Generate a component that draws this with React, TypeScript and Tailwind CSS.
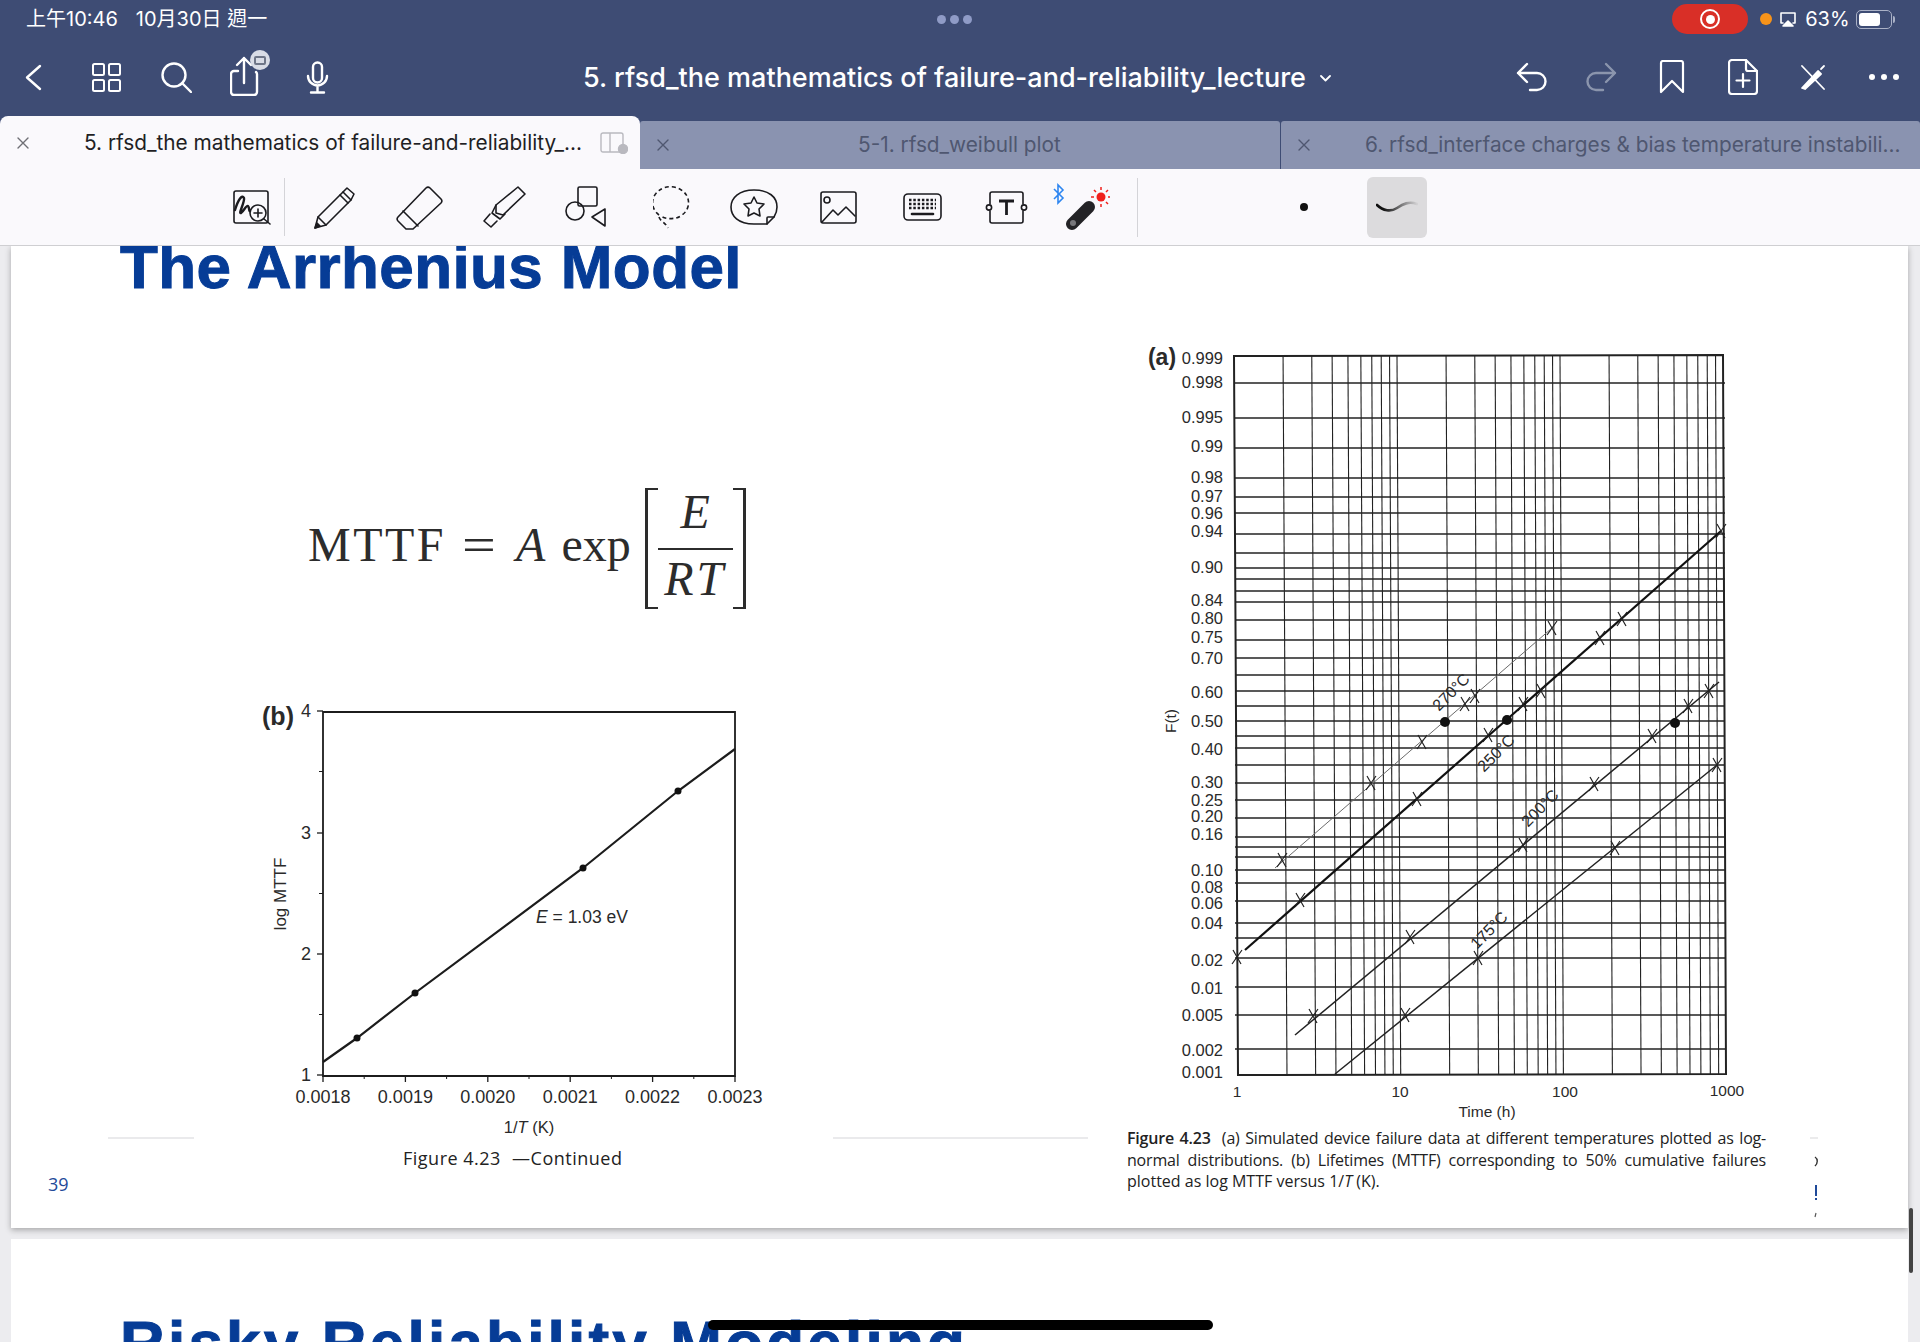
import type {ReactNode} from 'react';

const SANS = "[font-family:'Liberation_Sans',sans-serif]";
const UI = "[font-family:Inter,'Noto_Sans_CJK_TC',sans-serif]";

// --- header icons ---

function Ico({w, h, className, children, color = 'white', sw = 2.4}: {
  w: number;
  h: number;
  className?: string;
  children: ReactNode;
  color?: string;
  sw?: number;
}) {
  return (
    <svg
      width={w}
      height={h}
      viewBox={`0 0 ${w} ${h}`}
      fill="none"
      stroke={color}
      strokeWidth={sw}
      strokeLinecap="round"
      strokeLinejoin="round"
      className={`shrink-0 ${className ?? ''}`}
    >
      {children}
    </svg>
  );
}

function ShareIcon() {
  return (
    <div className="relative ml-[38px] mt-[-2px] h-[40px] w-[30px]">
      <Ico w={30} h={40}>
        <path d="M8 15H4a3 3 0 0 0-3 3v18a3 3 0 0 0 3 3h20a3 3 0 0 0 3-3V18a3 3 0 0 0-1-2" />
        <path d="M14 27V2M7 9l7-7 7 7" />
      </Ico>
      <span className="absolute left-[20px] top-[-6px] flex size-[20px] items-center justify-center rounded-full bg-[#d9dce6]">
        <span className="h-[9px] w-[12px] rounded-[2px] border-2 border-[#6f7688]" />
      </span>
    </div>
  );
}

function CloseX({color}: {color: string}) {
  return (
    <Ico w={12} h={12} color={color} sw={1.4}>
      <path d="M1 1l10 10M11 1L1 11" />
    </Ico>
  );
}

// --- toolbar icons ---

function Tool({w, h, ml, children}: {w: number; h: number; ml: number; children: ReactNode}) {
  return (
    <svg
      width={w}
      height={h}
      viewBox={`0 0 ${w} ${h}`}
      fill="none"
      stroke="#1b1b1f"
      strokeWidth={1.6}
      strokeLinecap="round"
      strokeLinejoin="round"
      className="shrink-0"
      style={{marginLeft: ml}}
    >
      {children}
    </svg>
  );
}

function Toolbar() {
  return (
    <div className="relative z-10 flex h-[77px] items-center border-b border-[#cfcfd2] bg-[#faf9fc] pl-[233px]">
      <Tool w={38} h={35} ml={0}>
        <rect x="1" y="1" width="34" height="32" rx="2" />
        <path d="M2 20c3-10 7-16 9-12 1 4-6 16-3 15 3-2 5-8 7-7 2 2 0 6 3 5" strokeWidth={2.4} />
        <circle cx="25" cy="23" r="8" fill="#faf9fc" />
        <path d="M25 19v8M21 23h8M31 29l6 5" />
      </Tool>
      <div className="ml-[13px] h-[58px] w-px bg-[#d4d4d8]" />
      <Tool w={42} h={43} ml={29}>
        <path d="M1 42l3-11L29 6l8 8-25 25z" />
        <path d="M4 31l8 8M29 6l4-4 7 6-3 6M26 9l8 8" />
        <path d="M1 42l5-2-3-3z" fill="#1b1b1f" />
      </Tool>
      <Tool w={48} h={45} ml={39}>
        <path d="M3 32L31 3a3 3 0 0 1 4 0l11 11a3 3 0 0 1 0 4L18 44H11L3 36a3 3 0 0 1 0-4z" />
        <path d="M8 26l15 15" />
      </Tool>
      <Tool w={45} h={44} ml={39}>
        <path d="M14 20L36 2l7 7-22 21-7-2z" />
        <path d="M14 20l-4 8 8 6 5-5M8 29l-6 7 7 6 6-6" />
      </Tool>
      <Tool w={42} h={42} ml={38}>
        <rect x="13" y="1" width="19" height="19" rx="1.5" />
        <circle cx="10" cy="25" r="9" />
        <path d="M40 23v17L27 31z" />
      </Tool>
      <Tool w={38} h={43} ml={46}>
        <path
          d="M6 29A18 16 0 1 1 23 32c-5 1-11 1-15-2M6 31c1 4 6 5 9 11"
          strokeDasharray="4 3"
          strokeLinecap="butt"
        />
      </Tool>
      <Tool w={48} h={36} ml={39}>
        <path d="M24 35C8 35 1 27 1 18S9 1 24 1s23 7 23 17c0 4-1 7-3 10l-7 7z" />
        <path d="M37 35v-6a1 1 0 0 1 1-1h6" />
        <path d="M24 8l3 6 7 1-5 5 1 7-6-3-6 3 1-7-5-5 7-1z" />
      </Tool>
      <Tool w={37} h={33} ml={42}>
        <rect x="1" y="1" width="35" height="31" rx="2" />
        <circle cx="7" cy="9" r="3" />
        <path d="M2 31l11-12 5 5 8-8 9 9" />
      </Tool>
      <Tool w={39} h={28} ml={46}>
        <rect x="1" y="1" width="37" height="26" rx="4" />
        <path
          d="M6 7h27M6 11h27M6 15h27"
          strokeDasharray="2.5 1.8"
          strokeLinecap="butt"
          strokeWidth={2.4}
        />
        <path d="M9 21h21" strokeWidth={2.6} />
      </Tool>
      <Tool w={43} h={33} ml={43}>
        <path d="M5 13V3a2 2 0 0 1 2-2h29a2 2 0 0 1 2 2v10M5 20v10a2 2 0 0 0 2 2h29a2 2 0 0 0 2-2V20" />
        <circle cx="4" cy="16.5" r="2.6" />
        <circle cx="39" cy="16.5" r="2.6" />
        <path d="M14 10h15M21.500 10v14" strokeWidth={2.8} strokeLinecap="butt" />
      </Tool>
      <div className="relative ml-[24px] h-[48px] w-[58px]">
        <svg width="58" height="48" viewBox="0 0 58 48" className="absolute left-0 top-0">
          <path d="M2 6l9 9-5 5V2l5 5-9 9" fill="none" stroke="#2e86f0" strokeWidth="1.6" />
          <path d="M20 41L37 24" stroke="#232326" strokeWidth="12" strokeLinecap="round" />
          <circle cx="21" cy="40" r="3" fill="#77777b" />
          <circle cx="49" cy="14" r="4.500" fill="#f0201c" />
          <path
            d="M49 4v3M49 21v3M39 14h3M56 14h2M42 7l2 2M54 19l2 2M56 7l-2 2"
            stroke="#f0201c"
            strokeWidth="1.5"
          />
        </svg>
      </div>
      <div className="ml-[27px] h-[59px] w-px bg-[#d4d4d8]" />
      <span className="ml-[162px] size-[8px] rounded-full bg-[#111]" />
      <div className="ml-[59px] flex h-[61px] w-[60px] items-center justify-center rounded-[6px] bg-[#dcdbdd]">
        <svg width="42" height="14" viewBox="0 0 42 14" fill="none">
          <defs>
            <linearGradient id="brush" x1="0" x2="1" y1="0" y2="0">
              <stop offset="0.15" stopColor="#111" />
              <stop offset="1" stopColor="#111" stopOpacity="0.05" />
            </linearGradient>
          </defs>
          <path d="M1 5c6 6 14 7 20 3s12-7 20-4" stroke="url(#brush)" strokeWidth="2.6" strokeLinecap="round" />
        </svg>
      </div>
    </div>
  );
}

// --- figure (b) ---

function Txt({x, y, size = 18, anchor = 'middle', weight, italic, children, rotate}: {
  x: number;
  y: number;
  size?: number;
  anchor?: 'start' | 'middle' | 'end';
  weight?: number;
  italic?: boolean;
  rotate?: number;
  children: ReactNode;
}) {
  return (
    <text
      x={x}
      y={y}
      fontSize={size}
      fontWeight={weight}
      fontStyle={italic ? 'italic' : undefined}
      textAnchor={anchor}
      dominantBaseline="central"
      fill="#2a2a2a"
      stroke="none"
      transform={rotate ? `rotate(${rotate} ${x} ${y})` : undefined}
    >
      {children}
    </text>
  );
}

function FigureB() {
  const xs = ['0.0018', '0.0019', '0.0020', '0.0021', '0.0022', '0.0023'];
  const ys = [
    {label: '4', y: 711},
    {label: '3', y: 833},
    {label: '2', y: 954},
    {label: '1', y: 1075}
  ];
  const dots = [
    [357, 1038],
    [415, 993],
    [583, 868],
    [678, 791]
  ];
  return (
    <svg
      width="1000"
      height="445"
      viewBox="100 700 1000 445"
      fill="none"
      stroke="#1c1c1c"
      className={`ml-[52px] mt-[91px] shrink-0 ${SANS}`}
    >
      <path d="M323 712H735V1076H323Z" strokeWidth="1.8" />
      {xs.map((label, i) => {
        const x = 323 + i * 82.4;
        return (
          <g key={label}>
            <path d={`M${x} 1076v6`} strokeWidth="1.3" />
            {i < 5 && <path d={`M${x + 41.2} 1076v3`} strokeWidth="1" />}
            <Txt x={x} y={1097}>{label}</Txt>
          </g>
        );
      })}
      {ys.map((t, i) => (
        <g key={t.label}>
          <path d={`M317 ${t.y}h6`} strokeWidth="1.3" />
          {i < 3 && <path d={`M319 ${t.y + 60.500}h4`} strokeWidth="1" />}
          <Txt x={306} y={t.y}>{t.label}</Txt>
        </g>
      ))}
      <path d="M323 1062L357 1038L415 993L583 868L678 791L735 749" strokeWidth="2.2" />
      {dots.map(([x, y]) => (
        <circle key={x} cx={x} cy={y} r="3.500" fill="#111" stroke="none" />
      ))}
      <Txt x={278} y={716} size={25} weight={700}>(b)</Txt>
      <Txt x={280} y={894} size={17} rotate={-90}>log MTTF</Txt>
      <text x="536" y="917" fontSize="17.5" fill="#2a2a2a" stroke="none" dominantBaseline="central">
        <tspan fontStyle="italic">E</tspan> = 1.03 eV
      </text>
      <text x="529" y="1127" fontSize="16.5" fill="#2a2a2a" stroke="none" textAnchor="middle" dominantBaseline="central">
        1/<tspan fontStyle="italic">T</tspan> (K)
      </text>
      <path d="M108 1138H194M833 1138H1088" stroke="#e4e4e6" strokeWidth="1.5" />
    </svg>
  );
}

// --- figure (a) ---

const PROB_LINES = [
  383, 418, 448, 478, 497, 513, 534, 553, 568, 579, 591, 602, 620, 640, 658, 675, 691, 706, 721, 736,
  748, 765, 783, 800, 818, 837, 847, 857, 870, 883, 901, 923, 938, 958, 987, 1015, 1049
];

const PROB_LABELS: [string, number][] = [
  ['0.999', 358], ['0.998', 382], ['0.995', 417], ['0.99', 446], ['0.98', 477], ['0.97', 496],
  ['0.96', 513], ['0.94', 531], ['0.90', 567], ['0.84', 600], ['0.80', 618], ['0.75', 637],
  ['0.70', 658], ['0.60', 692], ['0.50', 721], ['0.40', 749], ['0.30', 782], ['0.25', 800],
  ['0.20', 816], ['0.16', 834], ['0.10', 870], ['0.08', 887], ['0.06', 903], ['0.04', 923],
  ['0.02', 960], ['0.01', 988], ['0.005', 1015], ['0.002', 1050], ['0.001', 1072]
];

const SERIES = [
  {
    line: 'M1275 868L1552 628',
    stroke: '#6b6b6b',
    width: 1,
    marks: [[1282, 860], [1371, 783], [1422, 742], [1465, 704], [1475, 696], [1552, 628]],
    dot: [1445, 722]
  },
  {
    line: 'M1245 950L1721 531',
    stroke: '#111',
    width: 2.2,
    marks: [[1237, 957], [1300, 900], [1417, 799], [1488, 735], [1523, 704], [1541, 691], [1600, 638], [1622, 619], [1721, 531]],
    dot: [1507, 720]
  },
  {
    line: 'M1295 1035L1719 682',
    stroke: '#222',
    width: 1.5,
    marks: [[1313, 1016], [1410, 937], [1523, 845], [1594, 784], [1652, 736], [1688, 706], [1709, 691]],
    dot: [1675, 723]
  },
  {
    line: 'M1335 1074L1717 765',
    stroke: '#222',
    width: 1.5,
    marks: [[1405, 1015], [1478, 958], [1615, 848], [1717, 765]]
  }
];

function FigureA() {
  const mult = [1, 2, 3, 4, 5, 6, 7, 8, 9];
  const verticals = [0, 1, 2].flatMap((decade) =>
    mult.map((m) => decade + Math.log10(m)).filter((d) => d > 0)
  );
  return (
    <svg
      width="703"
      height="788"
      viewBox="1127 340 703 788"
      fill="none"
      stroke="#222"
      className={`shrink-0 ${SANS}`}
    >
      {PROB_LINES.map((y) => (
        <path key={y} d={`M1235 ${y}H1725`} strokeWidth="1.3" />
      ))}
      {verticals.map((d) => (
        <path
          key={d}
          d={`M${1234 + 163 * d} 356L${1238 + 162.7 * d} 1074`}
          strokeWidth="1.1"
        />
      ))}
      <path d="M1234 356L1723 355L1726 1074L1238 1075Z" strokeWidth="2" />
      {SERIES.map((s) => (
        <g key={s.line}>
          <path d={s.line} stroke={s.stroke} strokeWidth={s.width} />
          {s.marks.map(([x, y]) => (
            <path key={x} d={`M${x - 4} ${y - 7}L${x + 4} ${y + 7}M${x + 5} ${y - 7}L${x - 5} ${y + 7}`} stroke="#222" strokeWidth="1.2" />
          ))}
          {s.dot && <circle cx={s.dot[0]} cy={s.dot[1]} r="5" fill="#111" stroke="none" />}
        </g>
      ))}
      {PROB_LABELS.map(([label, y]) => (
        <Txt key={label} x={1223} y={y} size={16.500} anchor="end">{label}</Txt>
      ))}
      <Txt x={1237} y={1091} size={15.500}>1</Txt>
      <Txt x={1400} y={1091} size={15.500}>10</Txt>
      <Txt x={1565} y={1091} size={15.500}>100</Txt>
      <Txt x={1727} y={1090} size={15.500}>1000</Txt>
      <Txt x={1487} y={1111} size={15.500}>Time (h)</Txt>
      <Txt x={1170} y={721} size={15.500} rotate={-90}>F(t)</Txt>
      <Txt x={1162} y={357} size={23} weight={700}>(a)</Txt>
      <Txt x={1451} y={692} size={16} rotate={-45}>270°C</Txt>
      <Txt x={1496} y={753} size={16} rotate={-45}>250°C</Txt>
      <Txt x={1540} y={808} size={16} rotate={-45}>200°C</Txt>
      <Txt x={1489} y={930} size={16} rotate={-45}>175°C</Txt>
    </svg>
  );
}

function Fragments() {
  return (
    <svg width="42" height="100" viewBox="0 0 42 100" fill="none" className="ml-[22px] shrink-0">
      <path d="M22 10H30" stroke="#e4e4e6" strokeWidth="1.5" />
      <path d="M27 29c3 2 3 6 0 9" stroke="#333" strokeWidth="1.4" />
      <path d="M28 57v11M28 70v2" stroke="#1f4a99" strokeWidth="2" />
      <path d="M28 85l-1 4" stroke="#555" strokeWidth="1.2" />
    </svg>
  );
}

function Formula() {
  const SERIF = "[font-family:'Liberation_Serif',serif] text-[48px] leading-[48px] text-[#2c2c2c]";
  return (
    <div className={`ml-[260px] mt-[148px] flex h-[121px] items-center ${SERIF}`}>
      <span className="mb-[8px] tracking-[2.5px]">MTTF</span>
      <span className="mb-[8px] ml-[16px] origin-left scale-x-125">=</span>
      <span className="mb-[8px] ml-[27px] italic">A</span>
      <span className="mb-[8px] ml-[16px]">exp</span>
      <div className="ml-[14px] flex h-[121px]">
        <div className="w-[13px] border-y-2 border-l-[3px] border-[#2c2c2c]" />
        <div className="flex w-[75px] flex-col items-center italic">
          <span>E</span>
          <div className="mt-[12px] h-[2px] w-full bg-[#2c2c2c]" />
          <span className="mt-[5px] tracking-[3px]">RT</span>
        </div>
        <div className="w-[13px] border-y-2 border-r-[3px] border-[#2c2c2c]" />
      </div>
    </div>
  );
}

function Title({children, className}: {children: ReactNode; className?: string}) {
  return (
    <h1
      className={`ml-[109px] shrink-0 whitespace-nowrap text-[62px] font-bold leading-[60px] text-[#063c96] [-webkit-text-stroke:1px_#063c96] ${SANS} ${className ?? ''}`}
    >
      {children}
    </h1>
  );
}

const CAPTION = "[font-family:'Open_Sans',sans-serif] text-[16px] leading-[21.5px] text-[#222]";

export default function App() {
  return (
    <div className={`relative flex h-[1342px] w-[1920px] flex-col overflow-hidden bg-[#ececef] ${UI}`}>
      {/* status bar + nav */}
      <header className="relative z-10 h-[169px] shrink-0 bg-[#3e4c74] text-white">
        <div className="flex h-[38px] items-center pl-[26px] text-[20px]">
          <span>上午10:46</span>
          <span className="ml-[18px]">10月30日 週一</span>
          <div className="ml-[670px] flex gap-[4px]">
            <span className="size-[9px] rounded-full bg-[#8f9bc6]" />
            <span className="size-[9px] rounded-full bg-[#8f9bc6]" />
            <span className="size-[9px] rounded-full bg-[#8f9bc6]" />
          </div>
          <div className="ml-[700px] flex h-[30px] w-[76px] items-center justify-center rounded-full bg-[#d92f27]">
            <span className="flex size-[20px] items-center justify-center rounded-full border-2 border-white">
              <span className="size-[9px] rounded-full bg-white" />
            </span>
          </div>
          <span className="ml-[12px] size-[12px] rounded-full bg-[#f7931a]" />
          <Ico w={18} h={16} sw={1.6} className="ml-[7px]">
            <path d="M4 12H2V2h14v10h-2" />
            <path d="M9 10l5 5H4z" fill="white" />
          </Ico>
          <span className="ml-[8px]">63%</span>
          <div className="ml-[6px] flex h-[19px] w-[36px] items-center rounded-[5px] border border-[#aab1c6] p-[2px]">
            <div className="h-full w-[21px] rounded-[3px] bg-white" />
          </div>
          <span className="ml-[1px] h-[7px] w-[2px] rounded-r bg-[#aab1c6]" />
        </div>

        <div className="flex h-[78px] items-center pl-[25px]">
          <Ico w={17} h={27}>
            <path d="M15 2L2 13.500L15 25" />
          </Ico>
          <Ico w={29} h={29} sw={2} className="ml-[50px]">
            <rect x="1" y="1" width="11" height="11" rx="1.5" />
            <rect x="17" y="1" width="11" height="11" rx="1.5" />
            <rect x="1" y="17" width="11" height="11" rx="1.5" />
            <rect x="17" y="17" width="11" height="11" rx="1.5" />
          </Ico>
          <Ico w={31} h={31} className="ml-[40px]">
            <circle cx="13" cy="13" r="11.500" />
            <path d="M21 21l9 9" />
          </Ico>
          <ShareIcon />
          <Ico w={23} h={33} className="ml-[46px]">
            <rect x="7" y="1.500" width="9" height="20" rx="4.500" />
            <path d="M2 15a9.500 9.500 0 0 0 19 0M11.500 25v6M5 31.500h13" />
          </Ico>
          <span className="ml-[254px] mt-[2px] w-[725px] whitespace-nowrap text-[27px] font-medium">
            5. rfsd_the mathematics of failure-and-reliability_lecture
          </span>
          <Ico w={11} h={7} sw={1.8} className="ml-[12px] mt-[2px]">
            <path d="M1 1l4.500 4.500L10 1" />
          </Ico>
          <Ico w={31} h={30} className="ml-[185px]">
            <path d="M11 2L2 11l9 9M2 11h19a8.500 8.500 0 0 1 0 17h-7" />
          </Ico>
          <Ico w={31} h={30} color="#8b95ad" className="ml-[39px]">
            <path d="M20 2l9 9-9 9M29 11H10a8.500 8.500 0 0 0 0 17h7" />
          </Ico>
          <Ico w={26} h={34} sw={2.2} className="ml-[42px]">
            <path d="M2 3a2 2 0 0 1 2-2h18a2 2 0 0 1 2 2v29l-11-11L2 32z" />
          </Ico>
          <Ico w={30} h={36} sw={2.2} className="ml-[43px]">
            <path d="M18 1H4a3 3 0 0 0-3 3v28a3 3 0 0 0 3 3h22a3 3 0 0 0 3-3V12z" />
            <path d="M18 1v9a2 2 0 0 0 2 2h9M15 15v13M8.500 21.500h13" />
          </Ico>
          <Ico w={27} h={26} sw={1.8} className="ml-[42px]">
            <path d="M2 2l22 23" />
            <path d="M2 24L18 7l3 3L5 25z" fill="white" />
            <path d="M21 5l3-3" />
          </Ico>
          <div className="ml-[42px] flex gap-[6px]">
            <span className="size-[6px] rounded-full bg-white" />
            <span className="size-[6px] rounded-full bg-white" />
            <span className="size-[6px] rounded-full bg-white" />
          </div>
        </div>

        <div className="flex h-[53px] items-end text-[20.800px]">
          <div className="flex h-[53px] w-[640px] items-center rounded-t-[8px] bg-[#faf9fc] pl-[17px] text-[#1f1f24]">
            <CloseX color="#6f6f75" />
            <span className="ml-[55px] w-[499px] whitespace-nowrap">
              5. rfsd_the mathematics of failure-and-reliability_...
            </span>
            <svg width="28" height="22" viewBox="0 0 28 22" fill="none" stroke="#b9b9bf" strokeWidth="1.400" className="ml-[17px]">
              <rect x="1" y="1" width="22" height="19" rx="2" />
              <path d="M10 1v19" />
              <circle cx="23" cy="17" r="4.500" fill="#b9b9bf" />
            </svg>
          </div>
          <div className="flex h-[48px] w-[640px] items-center rounded-t-[3px] bg-[#8a93b0] pl-[17px] text-[#4f5770]">
            <CloseX color="#4f5770" />
            <span className="ml-[189px] whitespace-nowrap">5-1. rfsd_weibull plot</span>
          </div>
          <div className="ml-px flex h-[48px] w-[639px] items-center rounded-t-[3px] bg-[#8a93b0] pl-[17px] text-[#4f5770]">
            <CloseX color="#4f5770" />
            <span className="ml-[55px] whitespace-nowrap">
              6. rfsd_interface charges &amp; bias temperature instabili...
            </span>
          </div>
        </div>
      </header>

      <Toolbar />

      <main className="min-h-0 flex-1">
        <section className="ml-[11px] flex h-[982px] w-[1897px] flex-col bg-white shadow-[0_2px_6px_rgba(0,0,0,0.3)]">
          <Title className="mt-[-9px] tracking-[0.4px]">The Arrhenius Model</Title>
          <div className="mt-[43px] flex">
            <div className="ml-[37px] flex w-[1079px] shrink-0 flex-col">
              <Formula />
              <FigureB />
              <p className="ml-[355px] h-[26px] text-[18px] font-medium leading-[26px] tracking-[0.5px] text-[#222] [font-family:'Open_Sans',sans-serif]">
                Figure 4.23 <span className="ml-[6px]">—Continued</span>
              </p>
              <p className="h-[26px] text-[18px] leading-[26px] text-[#1f4a99] [font-family:'Open_Sans',sans-serif]">39</p>
            </div>
            <div className="flex flex-col">
              <FigureA />
              <div className="flex">
                <div className={`w-[639px] shrink-0 ${CAPTION}`}>
                  <p className="whitespace-nowrap tracking-[-0.2px] [text-align-last:justify]">
                    <b className="font-semibold">Figure 4.23</b>&nbsp; (a) Simulated device failure data at different temperatures plotted as log-
                  </p>
                  <p className="whitespace-nowrap tracking-[-0.2px] [text-align-last:justify]">
                    normal distributions. (b) Lifetimes (MTTF) corresponding to 50% cumulative failures
                  </p>
                  <p>
                    plotted as log MTTF versus 1/<i>T</i> (K).
                  </p>
                </div>
                <Fragments />
              </div>
            </div>
          </div>
        </section>

        <section className="ml-[11px] mt-[11px] flex h-[400px] w-[1897px] flex-col bg-white pt-[74px]">
          <Title className="tracking-[3.2px]">Risky Reliability Modeling</Title>
        </section>
      </main>

      {/* overlays */}
      <div className="absolute left-[708px] top-[1320px] z-20 h-[10px] w-[505px] rounded-full bg-black" />
      <div className="absolute left-[1909px] top-[1208px] z-20 h-[65px] w-[4px] rounded-full bg-[#444]" />
    </div>
  );
}
